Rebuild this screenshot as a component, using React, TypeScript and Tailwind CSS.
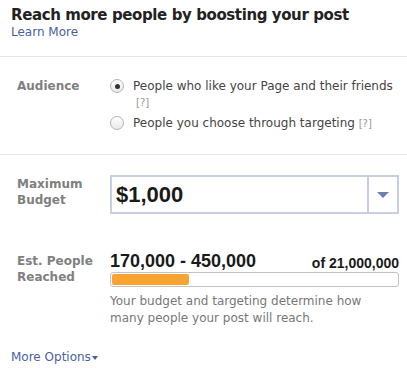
const tahoma = { fontFamily: '"DejaVu Sans", Verdana, sans-serif' };
const arial = { fontFamily: '"Liberation Sans", Arial, sans-serif' };

function Radio({ checked }: { checked?: boolean }) {
  return (
    <span className="mt-[1px] flex h-[14px] w-[14px] flex-shrink-0 items-center justify-center rounded-full border border-[#b5b5b5] bg-gradient-to-b from-white to-[#e8e8e8]">
      {checked && <span className="h-[5px] w-[5px] rounded-full bg-[#333]" />}
    </span>
  );
}

export default function App() {
  return (
    <div className="h-[368px] w-[407px] overflow-hidden bg-white" style={tahoma}>
      <div className="h-[57px] border-b border-[#e5e5e5] pl-[11px] pt-[6px]">
        <h1 className="text-[15px] font-bold leading-[19px] tracking-[-0.4px] text-[#222]">
          Reach more people by boosting your post
        </h1>
        <a className="block text-[12px] leading-[15px] text-[#4b5fa0]">Learn More</a>
      </div>

      <div className="flex h-[98px] border-b border-[#e5e5e5] pl-[17px] pt-[21px]">
        <div className="w-[93px] text-[12px] font-bold leading-[16px] text-[#808080]">Audience</div>
        <div className="text-[12px] leading-[16px] text-[#444]">
          <label className="flex gap-[9px]">
            <Radio checked />
            <span>
              People who like your Page and their friends
              <br />
              <span className="pl-[3px] text-[10px] text-[#999]">[?]</span>
            </span>
          </label>
          <label className="mt-[4px] flex gap-[9px]">
            <Radio />
            <span>
              People you choose through targeting <span className="text-[10px] text-[#999]">[?]</span>
            </span>
          </label>
        </div>
      </div>

      <div className="flex pl-[17px] pt-[20px]">
        <div className="w-[93px] pt-[1px] text-[12px] font-bold leading-[16px] text-[#808080]">
          Maximum
          <br />
          Budget
        </div>
        <div className="flex h-[39px] w-[289px] border-2 border-[#c7cfe0]">
          <div className="flex flex-1 items-center pl-[4px] text-[22px] font-bold text-[#1a1a1a]" style={arial}>
            $1,000
          </div>
          <div className="flex w-[30px] items-center justify-center border-l-2 border-[#c7cfe0]">
            <svg width="12" height="6" viewBox="0 0 12 6">
              <path d="M0 0h12L6 6z" fill="#6d7fb0" />
            </svg>
          </div>
        </div>
      </div>

      <div className="flex pl-[17px] pt-[39px]">
        <div className="w-[93px] text-[12px] font-bold leading-[16px] text-[#808080]">
          Est. People
          <br />
          Reached
        </div>
        <div className="w-[289px]">
          <div className="flex items-end justify-between font-bold text-[#1a1a1a]" style={arial}>
            <span className="text-[18px] leading-[17px]">170,000 - 450,000</span>
            <span className="text-[14px] leading-[14px]">of 21,000,000</span>
          </div>
          <div className="mt-[2px] h-[15px] rounded-[3px] border border-[#c4c4c4] p-[1px]">
            <div className="h-full w-[27%] rounded-[2px] bg-[#f9a431]" />
          </div>
          <p className="mt-[6px] w-[260px] text-[12px] leading-[17px] text-[#777]">
            Your budget and targeting determine how many people your post will reach.
          </p>
        </div>
      </div>

      <div className="pl-[11px] pt-[17px]">
        <a className="text-[12px] leading-[15px] text-[#4b5fa0]">
          More Options
          <span className="ml-[1px] inline-block align-middle">
            <svg width="6" height="4" viewBox="0 0 6 4">
              <path d="M0 0h6L3 4z" fill="#4b5fa0" />
            </svg>
          </span>
        </a>
      </div>
    </div>
  );
}
